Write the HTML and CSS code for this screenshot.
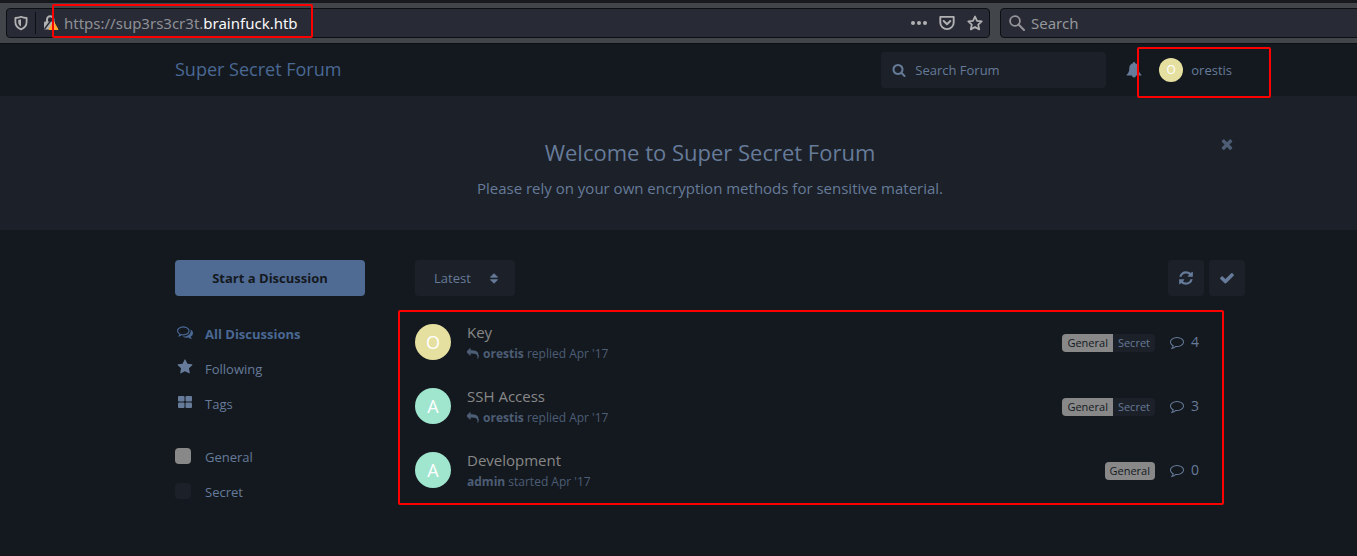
FILE: index.html
```html
<!DOCTYPE html>
<html lang="en">
<head>
<meta charset="utf-8">
<title>Super Secret Forum</title>
<link rel="stylesheet" href="styles.css">
</head>
<body>
<svg class="sprite" aria-hidden="true">
  <symbol id="search" viewBox="0 0 1792 1792"><path d="M1216 832q0-185-131.5-316.5t-316.5-131.5-316.5 131.5-131.5 316.5 131.5 316.5 316.5 131.5 316.5-131.5 131.5-316.5zm512 832q0 52-38 90t-90 38q-54 0-90-38l-343-342q-179 124-399 124-143 0-273.5-55.5t-225-150-150-225-55.5-273.5 55.5-273.5 150-225 225-150 273.5-55.5 273.5 55.5 225 150 150 225 55.5 273.5q0 220-124 399l343 343q37 37 37 90z"/></symbol>
  <symbol id="check" viewBox="0 0 1792 1792"><path d="M1671 566q0 40-28 68l-724 724-136 136q-28 28-68 28t-68-28l-136-136-362-362q-28-28-28-68t28-68l136-136q28-28 68-28t68 28l294 295 656-657q28-28 68-28t68 28l136 136q28 28 28 68z"/></symbol>
  <symbol id="times" viewBox="0 0 1792 1792"><path d="M1490 1322q0 40-28 68l-136 136q-28 28-68 28t-68-28l-294-294-294 294q-28 28-68 28t-68-28l-136-136q-28-28-28-68t28-68l294-294-294-294q-28-28-28-68t28-68l136-136q28-28 68-28t68 28l294 294 294-294q28-28 68-28t68 28l136 136q28 28 28 68t-28 68l-294 294 294 294q28 28 28 68z"/></symbol>
  <symbol id="refresh" viewBox="0 0 1792 1792"><path d="M1639 1056q0 5-1 7-64 268-268 434.5t-478 166.5q-146 0-282.5-55t-243.5-157l-129 129q-19 19-45 19t-45-19-19-45v-448q0-26 19-45t45-19h448q26 0 45 19t19 45-19 45l-137 137q71 66 161 102t187 36q134 0 250-65t186-179q11-17 53-117 8-23 30-23h192q13 0 22.5 9.5t9.5 22.5zm25-800v448q0 26-19 45t-45 19h-448q-26 0-45-19t-19-45 19-45l138-138q-148-137-349-137-134 0-250 65t-186 179q-11 17-53 117-8 23-30 23h-199q-13 0-22.5-9.5t-9.5-22.5v-7q65-268 270-434.5t480-166.5q146 0 284 55.5t245 156.5l130-129q19-19 45-19t45 19 19 45z"/></symbol>
  <symbol id="star" viewBox="0 0 1792 1792"><path d="M1728 647q0 22-26 48l-363 354 86 500q1 7 1 20 0 21-10.5 35.5t-30.5 14.5q-19 0-40-12l-449-236-449 236q-22 12-40 12-21 0-31.5-14.5t-10.5-35.5q0-6 2-20l86-500-364-354q-25-27-25-48 0-37 56-46l502-73 225-455q19-41 49-41t49 41l225 455 502 73q56 9 56 46z"/></symbol>
  <symbol id="grid" viewBox="0 0 16 16"><rect x="1" y="2" width="6.500" height="5.500" rx="1"/><rect x="8.500" y="2" width="6.500" height="5.500" rx="1"/><rect x="1" y="8.500" width="6.500" height="5.500" rx="1"/><rect x="8.500" y="8.500" width="6.500" height="5.500" rx="1"/></symbol>
  <symbol id="comment" viewBox="0 0 1792 1792"><path d="M896 384q-204 0-381.5 69.5t-282 187.5-104.5 255q0 112 71.5 213.5t201.5 175.5l87 50-27 96q-24 91-70 172 152-63 275-171l43-38 57 6q69 8 130 8 204 0 381.5-69.5t282-187.5 104.5-255-104.5-255-282-187.5-381.5-69.5zm896 512q0 174-120 321.5t-326 233-450 85.5q-70 0-145-8-198 175-460 242-49 14-114 22h-5q-15 0-27-10.5t-16-27.5v-1q-3-4-.5-12t2-10 4.5-9.5l6-9 7-8.5 8-9q7-8 31-34.5t34.5-38 31-39.5 32.5-51 27-59 26-76q-157-89-247.5-220t-90.5-281q0-130 71-248.5t191-204.5 286-136.5 348-50.5 348 50.5 286 136.5 191 204.5 71 248.5z"/></symbol>
  <symbol id="comments" viewBox="0 0 1792 1792"><path d="M704 384q-153 0-286 52t-211.5 141-78.5 191q0 82 53 158t149 132l97 56-35 84q34-20 62-39l44-31 53 10q78 14 153 14 153 0 286-52t211.5-141 78.5-191-78.5-191-211.5-141-286-52zm0-128q191 0 353.5 68.5t256.5 186.5 94 257-94 257-256.5 186.5-353.5 68.5q-86 0-176-16-124 88-278 128-36 9-86 16h-3q-11 0-20.5-8t-11.5-21q-1-3-1-6.5t.5-6.5 2-6l2.5-5 3.5-5.5 4-5 4.5-5 4-4.5q5-6 23-25t26-29.5 22.5-29 25-38.5 20.5-44q-124-72-195-177t-71-224q0-139 94-257t256.5-186.5 353.5-68.5zm822 1169q10 24 20.5 44t25 38.5 22.5 29 26 29.5 23 25q1 1 4 4.5t4.5 5 4 5 3.5 5.5l2.5 5 2 6 .5 6.5-1 6.5q-3 14-13 22t-22 7q-50-7-86-16-154-40-278-128-90 16-176 16-271 0-472-132 58 4 88 4 161 0 309-45t264-129q125-92 192-212t67-254q0-77-23-152 129 71 204 178t75 230q0 120-71 224.5t-195 176.5z"/></symbol>
  <symbol id="reply" viewBox="0 0 1792 1792"><path d="M1792 1120q0 166-127 451-3 7-10.5 24t-13.5 30-13 22q-12 17-28 17-15 0-23.5-10t-8.5-25q0-9 2.5-26.5t2.5-23.5q5-68 5-123 0-112-19.5-200.5t-54-153.5-89-112-117.5-79.5-151-49.5-177-20.5-203-5.5h-224v256q0 26-19 45t-45 19-45-19l-512-512q-19-19-19-45t19-45l512-512q19-19 45-19t45 19 19 45v256h224q713 0 875 403 53 134 53 333z"/></symbol>
  <symbol id="bell" viewBox="0 0 16 16"><path d="M8 0a1 1 0 0 1 1 1.200C11.300 1.700 12.700 3.500 12.700 6c0 3.200.8 5.200 2.500 6.600a.6.6 0 0 1-.4 1H10a2 2 0 0 1-4 0H1.200a.6.6 0 0 1-.4-1C2.500 11.200 3.300 9.200 3.300 6c0-2.500 1.400-4.300 3.700-4.800A1 1 0 0 1 8 0z"/></symbol>
  <symbol id="sort" viewBox="0 0 16 16"><path d="M8 3 12 7H4zM4 10h8l-4 4z" stroke="currentColor" stroke-linejoin="round"/></symbol>
  <symbol id="shield" viewBox="0 0 16 16"><path d="M8 1.800Q10.500 3 13.600 3V7c0 3.500-2 5.900-5.600 7.300C4.400 12.900 2.400 10.500 2.400 7V3Q5.500 3 8 1.800z" fill="none" stroke="currentColor" stroke-width="1.800" stroke-linejoin="round"/><path d="M8 4.300v7.300C6.300 10.600 5.200 9.100 5.200 7V5z"/></symbol>
  <symbol id="lock" viewBox="0 0 18 18"><path d="M5 8V5.500a3.200 3.200 0 0 1 6.400 0V8" fill="none" stroke="currentColor" stroke-width="2"/><rect x="2" y="7.500" width="11" height="8" rx="1"/><path d="M2.500 15 12 2.500" stroke="#282a35" stroke-width="1.300"/><path d="M11.500 7.500 16 15.500H7z" fill="#ffa62b" stroke="#ffa62b" stroke-linejoin="round"/><path d="M11.500 9.500v3M11.500 13.500v1.200" stroke="#fff" stroke-width="1.200"/></symbol>
  <symbol id="pocket" viewBox="0 0 16 16"><path d="M1.300 1.900h13.400v5.500a6.700 6.700 0 0 1-13.400 0z" fill="none" stroke="currentColor" stroke-width="1.900" stroke-linejoin="round"/><path d="M4.700 6 8 9.200 11.300 6" fill="none" stroke="currentColor" stroke-width="2" stroke-linecap="round" stroke-linejoin="round"/></symbol>
  <symbol id="bookmark" viewBox="0 0 16 16"><path d="M8 1.500 10 5.900l4.700.5-3.500 3.200 1 4.800L8 12l-4.200 2.400 1-4.800L1.300 6.400 6 5.900z" fill="none" stroke="currentColor" stroke-width="1.800" stroke-linejoin="round"/></symbol>
  <symbol id="dots" viewBox="0 0 16 16"><circle cx="2" cy="8" r="2"/><circle cx="8" cy="8" r="2"/><circle cx="14" cy="8" r="2"/></symbol>
  <symbol id="glass" viewBox="0 0 16 16"><circle cx="6" cy="6" r="4.900" fill="none" stroke="currentColor" stroke-width="1.800"/><path d="m9.500 9.500 5.500 5.500" stroke="currentColor" stroke-width="2" stroke-linecap="round"/></symbol>
</svg>

<div class="browser">
  <div class="address">
    <svg class="icon"><use href="#shield"/></svg>
    <span class="divider"></span>
    <svg class="lock"><use href="#lock"/></svg>
    <div class="url" role="textbox" aria-label="Address">https://sup3rs3cr3t.<span class="host">brainfuck.htb</span></div>
    <svg class="icon"><use href="#dots"/></svg>
    <svg class="icon"><use href="#pocket"/></svg>
    <svg class="icon"><use href="#bookmark"/></svg>
    <span class="mark mark-url"></span>
  </div>
  <div class="web-search">
    <svg class="icon"><use href="#glass"/></svg>
    <input class="web-input" type="text" placeholder="Search" aria-label="Search the web">
  </div>
</div>

<header class="header container">
  <a class="brand" href="#">Super Secret Forum</a>
  <div class="forum-search">
    <svg class="icon-small"><use href="#search"/></svg>
    <input class="forum-input" type="text" placeholder="Search Forum" aria-label="Search Forum">
  </div>
  <button class="bell" aria-label="Notifications"><svg class="icon"><use href="#bell"/></svg></button>
  <button class="user"><span class="avatar avatar-small yellow">O</span>orestis<span class="mark mark-user"></span></button>
</header>

<section class="hero container">
  <button class="close" aria-label="Close"><svg class="icon"><use href="#times"/></svg></button>
  <h1 class="hero-title">Welcome to Super Secret Forum</h1>
  <p class="hero-text">Please rely on your own encryption methods for sensitive material.</p>
</section>

<main class="main container">
  <nav class="side">
    <button class="start">Start a Discussion</button>
    <a class="nav-link active" href="#"><svg class="icon"><use href="#comments"/></svg>All Discussions</a>
    <a class="nav-link" href="#"><svg class="icon"><use href="#star"/></svg>Following</a>
    <a class="nav-link" href="#"><svg class="icon"><use href="#grid"/></svg>Tags</a>
    <a class="nav-link tag-first" href="#"><span class="swatch grey"></span>General</a>
    <a class="nav-link" href="#"><span class="swatch"></span>Secret</a>
  </nav>
  <div class="content">
    <div class="toolbar">
      <div class="sort">
        <select class="sort-select" aria-label="Sort"><option>Latest</option></select>
        <svg class="icon-small sort-icon"><use href="#sort"/></svg>
      </div>
      <button class="tool" aria-label="Refresh"><svg class="icon"><use href="#refresh"/></svg></button>
      <button class="tool" aria-label="Mark all as read"><svg class="icon"><use href="#check"/></svg></button>
    </div>
    <ul class="list">
      <li class="item">
        <span class="avatar yellow">O</span>
        <div class="info"><a class="title" href="#">Key</a><div class="meta"><svg class="icon-reply"><use href="#reply"/></svg><span><b>orestis</b> replied Apr '17</span></div></div>
        <div class="tags"><span class="tag general">General</span><span class="tag">Secret</span></div>
        <div class="count"><svg class="icon-small"><use href="#comment"/></svg>4</div>
      </li>
      <li class="item">
        <span class="avatar green">A</span>
        <div class="info"><a class="title" href="#">SSH Access</a><div class="meta"><svg class="icon-reply"><use href="#reply"/></svg><span><b>orestis</b> replied Apr '17</span></div></div>
        <div class="tags"><span class="tag general">General</span><span class="tag">Secret</span></div>
        <div class="count"><svg class="icon-small"><use href="#comment"/></svg>3</div>
      </li>
      <li class="item">
        <span class="avatar green">A</span>
        <div class="info"><a class="title" href="#">Development</a><div class="meta"><span><b>admin</b> started Apr '17</span></div></div>
        <div class="tags"><span class="tag general">General</span></div>
        <div class="count"><svg class="icon-small"><use href="#comment"/></svg>0</div>
      </li>
      <li class="mark mark-list" aria-hidden="true"></li>
    </ul>
  </div>
</main>
</body>
</html>
```
FILE: styles.css
```css
* { box-sizing: border-box; }

body {
  margin: 0;
  min-height: 100vh;
  border-bottom: 1px solid #19171b;
  background: #14191f;
  color: #667b99;
  font: 13px/20px "Open Sans", sans-serif;
}

button, input, select {
  margin: 0;
  padding: 0;
  border: 0;
  background: none;
  color: inherit;
  font: inherit;
  outline: 0;
}

a { color: inherit; text-decoration: none; }
svg { flex: none; fill: currentColor; }
input::placeholder { color: inherit; opacity: 1; }

.sprite { position: absolute; width: 0; height: 0; }
.icon { width: 16px; height: 16px; }
.icon-small { width: 14px; height: 14px; }
.container { padding-left: 175px; padding-right: 112px; }

.mark {
  position: absolute;
  z-index: 1;
  border: 2px solid #f00;
  border-radius: 2px;
  pointer-events: none;
}

/* Browser toolbar */
.browser {
  display: flex;
  gap: 10px;
  padding: 5px 0 5px 6px;
  border-top: 3px solid #17191e;
  border-bottom: 1px solid #0d0f13;
  background: #42454a;
  color: #b1b1b3;
  font: 15px/20px "Noto Sans", sans-serif;
}

.address, .web-search {
  display: flex;
  align-items: center;
  height: 30px;
  border: 1px solid #0d0f13;
  border-radius: 4px;
  background: #282a35;
}

.address { position: relative; flex: 1; gap: 12px; padding: 0 6px; }
.web-search { width: 363px; gap: 6px; padding-left: 8px; margin-right: -6px; color: #95969b; }
.web-input { flex: 1; min-width: 0; }
.divider { width: 1px; height: 22px; margin: 0 -6px; background: #0d0f13; }
.lock { width: 18px; height: 18px; }
.url { flex: 1; margin-left: -8px; color: #8f9095; }
.host { color: #f9f9fa; }
.mark-url { left: 45px; top: -5px; width: 261px; height: 34px; }

/* Forum header */
.header { display: flex; align-items: center; height: 52px; }
.brand { flex: 1; padding-bottom: 2px; color: #4a6894; font-size: 18px; line-height: 24px; }

.forum-search {
  display: flex;
  align-items: center;
  gap: 9px;
  width: 225px;
  height: 36px;
  padding: 0 11px;
  border-radius: 4px;
  background: #1c2028;
}

.forum-input { flex: 1; min-width: 0; }
.bell { display: flex; margin-left: 20px; }
.user {
  position: relative;
  display: flex;
  align-items: center;
  gap: 8px;
  margin-left: 17px;
  padding-right: 13px;
}
.mark-user { left: -22px; top: -11px; width: 134px; height: 51px; }

.avatar {
  display: flex;
  align-items: center;
  justify-content: center;
  flex: none;
  width: 36px;
  height: 36px;
  border-radius: 50%;
  color: #fff;
  font-size: 18px;
}
.avatar-small { width: 24px; height: 24px; font-size: 12px; }
.yellow { background: #e5e0a0; }
.green { background: #a0e5ce; }

/* Welcome banner */
.hero {
  position: relative;
  padding-top: 41px;
  padding-bottom: 31px;
  background: #1c2028;
  text-align: center;
}
.hero-title { margin: 0 0 10px; font-size: 22px; font-weight: 400; line-height: 30px; }
.hero-text { margin: 0; font-size: 15px; line-height: 22px; }
.close { position: absolute; top: 40px; right: 122px; display: flex; color: #4d5d75; }

/* Page body */
.main { display: flex; gap: 50px; padding-top: 30px; }
.side { width: 190px; flex: none; }

.start {
  display: block;
  width: 100%;
  height: 36px;
  margin-bottom: 20px;
  border-radius: 4px;
  background: #4f6b93;
  color: #14191f;
  font-weight: 700;
}

.nav-link {
  display: flex;
  align-items: center;
  gap: 12px;
  height: 35px;
  padding-left: 2px;
}
.active { color: #4a6894; font-weight: 700; }
.nav-link .icon { margin-bottom: 3px; }
.tag-first { margin-top: 18px; }
.swatch {
  width: 16px;
  height: 16px;
  margin: 0 2px 1px -2px;
  border-radius: 4px;
  background: #1c2028;
}
.grey { background: #888; }

.content { flex: 1; min-width: 0; }
.toolbar { display: flex; gap: 5px; margin-bottom: 14px; }
.sort { position: relative; margin-right: auto; }
.sort-select {
  appearance: none;
  width: 100px;
  height: 36px;
  padding: 0 19px;
  border-radius: 4px;
  background: #1c2028;
}
.sort-icon { position: absolute; right: 14px; top: 11px; pointer-events: none; }
.tool {
  display: flex;
  align-items: center;
  justify-content: center;
  width: 36px;
  height: 36px;
  border-radius: 4px;
  background: #1c2028;
}

.list { position: relative; margin: 0; padding: 0; list-style: none; }
.mark-list { left: -17px; right: 21px; top: 0; bottom: -3px; }
.item { display: flex; align-items: center; height: 64px; padding-right: 46px; }
.info { flex: 1; margin-left: 16px; }
.title { display: block; color: #888; font-size: 15px; line-height: 24px; }
.meta { display: flex; align-items: center; gap: 4px; color: #4d5d75; font-size: 12px; }
.icon-reply { width: 12px; height: 12px; }

.tags {
  display: flex;
  overflow: hidden;
  margin-top: 2px;
  border-radius: 4px;
  font-size: 11px;
  font-weight: 500;
  line-height: 18px;
}
.tag { padding: 0 5px; background: #1c2028; }
.general { background: #888; color: #14191f; }
.count { display: flex; align-items: center; gap: 7px; margin-left: 15px; font-size: 14px; }
```
